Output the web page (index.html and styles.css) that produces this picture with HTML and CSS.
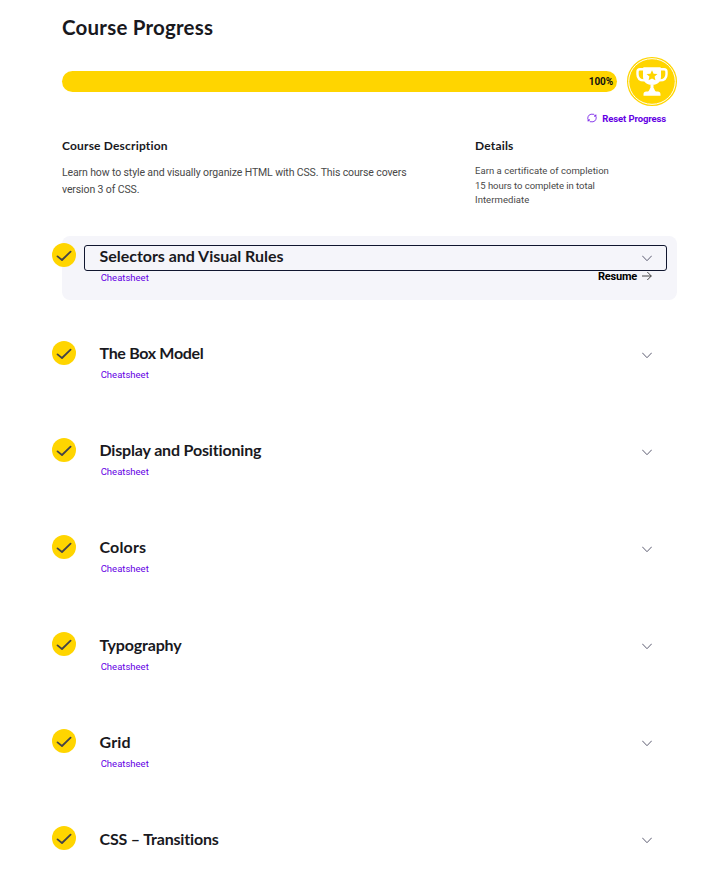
FILE: index.html
```html
<!DOCTYPE html>
<html lang="en">
<head>
<meta charset="utf-8">
<title>Course Progress</title>
<link rel="stylesheet" href="styles.css">
</head>
<body>
<svg class="defs" width="0" height="0" aria-hidden="true">
  <symbol id="check" viewBox="0 0 24 24"><path d="M5.500 13.400 10 17 18.600 8.600" fill="none" stroke="#444347" stroke-width="1.800" stroke-linecap="round" stroke-linejoin="round"/></symbol>
  <symbol id="chevron" viewBox="0 0 10 7"><path d="M.5 1 5 5.700 9.500 1" fill="none" stroke="#5d5d72" stroke-width="1" stroke-linecap="round" stroke-linejoin="round"/></symbol>
</svg>
<main class="page">
  <h1 class="page-title">Course Progress</h1>
  <div class="progress">
    <div class="bar"><span>100%</span></div>
    <svg class="trophy" viewBox="0 0 50 50" preserveAspectRatio="none">
      <circle cx="25" cy="25" r="25" fill="#ffd500"/>
      <circle cx="25" cy="25" r="23.300" fill="none" stroke="#fff" stroke-width="1"/>
      <path d="M17 10.500h16q1 0 1 1V20c0 5.300-3 8.500-9 8.500s-9-3.200-9-8.500v-8.500q0-1 1-1zM23.500 27h3v5h-3zM16.500 39.500V38c0-1.700 1-2.700 2.700-2.700h1.800c1.200 0 1.500-2.500 2.500-3.800h3c1 1.300 1.300 3.800 2.500 3.800h1.800c1.700 0 2.700 1 2.700 2.700v1.500z" fill="#fff"/>
      <path d="M17 12.500h-4q-2.500 0-2.500 2.500v2.500c0 4.200 2.300 6.300 6.800 6.300M33 12.500h4q2.500 0 2.500 2.500v2.500c0 4.200-2.300 6.300-6.800 6.300" fill="none" stroke="#fff" stroke-width="2.400"/>
      <path d="m25 13.500 1.600 3.500 3.900.4-2.900 2.600.8 3.800-3.400-1.900-3.400 1.900.8-3.800-2.900-2.600 3.900-.4z" fill="#ffd500"/>
    </svg>
  </div>
  <div class="reset">
    <svg viewBox="0 0 10 10"><path d="M1.700 7.700A4 4 0 0 1 4 1.200L7.200 1.300M8.300 2.300A4 4 0 0 1 6 8.800L2.800 8.700M.4 7.800H2.200V6M9.600 2.200H7.800V4" fill="none" stroke="#6400e4" stroke-width=".75"/></svg>
    <a>Reset Progress</a>
  </div>
  <div class="info">
    <section class="description">
      <h2>Course Description</h2>
      <p>Learn how to style and visually organize HTML with CSS. This course covers<br>version 3 of CSS.</p>
    </section>
    <section class="details">
      <h2>Details</h2>
      <ul><li>Earn a certificate of completion</li><li class="hours">15 hours to complete in total</li><li class="level">Intermediate</li></ul>
    </section>
  </div>
  <div class="modules">
    <article class="module current">
      <svg class="badge"><use href="#check"/></svg>
      <div class="content">
        <div class="heading"><h3>Selectors and Visual Rules</h3><svg class="chevron"><use href="#chevron"/></svg></div>
        <div class="links"><a class="sheet">Cheatsheet</a><a class="resume"><span>Resume</span><svg viewBox="0 0 10 10"><path d="M0 5h9.300M5.300 1l4 4-4 4" fill="none" stroke="#333" stroke-width=".9"/></svg></a></div>
      </div>
    </article>
    <article class="module">
      <svg class="badge"><use href="#check"/></svg>
      <div class="content">
        <div class="heading"><h3 class="tighter">The Box Model</h3><svg class="chevron"><use href="#chevron"/></svg></div>
        <div class="links"><a class="sheet">Cheatsheet</a></div>
      </div>
    </article>
    <article class="module">
      <svg class="badge"><use href="#check"/></svg>
      <div class="content">
        <div class="heading"><h3 class="tight">Display and Positioning</h3><svg class="chevron"><use href="#chevron"/></svg></div>
        <div class="links"><a class="sheet">Cheatsheet</a></div>
      </div>
    </article>
    <article class="module">
      <svg class="badge"><use href="#check"/></svg>
      <div class="content">
        <div class="heading"><h3 class="loose">Colors</h3><svg class="chevron"><use href="#chevron"/></svg></div>
        <div class="links"><a class="sheet">Cheatsheet</a></div>
      </div>
    </article>
    <article class="module">
      <svg class="badge"><use href="#check"/></svg>
      <div class="content">
        <div class="heading"><h3 class="tight">Typography</h3><svg class="chevron"><use href="#chevron"/></svg></div>
        <div class="links"><a class="sheet">Cheatsheet</a></div>
      </div>
    </article>
    <article class="module">
      <svg class="badge"><use href="#check"/></svg>
      <div class="content">
        <div class="heading"><h3 class="loose">Grid</h3><svg class="chevron"><use href="#chevron"/></svg></div>
        <div class="links"><a class="sheet">Cheatsheet</a></div>
      </div>
    </article>
    <article class="module">
      <svg class="badge"><use href="#check"/></svg>
      <div class="content">
        <div class="heading"><h3 class="tight">CSS – Transitions</h3><svg class="chevron"><use href="#chevron"/></svg></div>
      </div>
    </article>
  </div>
</main>
</body>
</html>
```
FILE: styles.css
```css
* { box-sizing: border-box; margin: 0; padding: 0; }
html, body { height: 870px; overflow: hidden; }
body { background: #fff; color: #19191e; font-family: Roboto, "Liberation Sans", sans-serif; font-variant-ligatures: none; }
svg { display: block; flex: none; }
.defs { position: absolute; }
h1, h2, h3, a, li, span { white-space: nowrap; }
h1, h2, h3 { font-family: Lato, "Liberation Sans", sans-serif; }
.page { width: 615px; margin-left: 62px; padding-top: 13px; }
.page-title { font-size: 20.500px; line-height: 28px; height: 44px; letter-spacing: .22px; }
.progress { display: flex; align-items: center; justify-content: space-between; height: 49px; }
.bar { width: 555px; height: 21px; border-radius: 11px; background: #ffd500; display: flex; align-items: center; justify-content: flex-end; padding-right: 4px; font-size: 10px; font-weight: 700; letter-spacing: -.1px; color: #111; }
.trophy { width: 50px; height: 49px; }
.reset { display: flex; align-items: center; justify-content: flex-end; gap: 5px; height: 14px; margin-top: 5px; padding-right: 11px; font-size: 9.500px; font-weight: 700; letter-spacing: -.12px; color: #6400e4; }
.reset svg { width: 10px; height: 10px; }
.info { display: flex; height: 111px; padding-top: 13px; }
.info h2 { font-size: 12px; line-height: 16px; letter-spacing: .18px; }
.description { width: 413px; }
.description p { margin-top: 10px; font-size: 10.500px; line-height: 17px; letter-spacing: -.12px; color: #484848; white-space: nowrap; }
.details ul { list-style: none; margin-top: 10px; font-size: 9.500px; line-height: 14.500px; letter-spacing: .04px; color: #484848; }
.details .hours { letter-spacing: -.04px; }
.details .level { letter-spacing: .06px; }
.modules { display: flex; flex-direction: column; gap: 33.150px; }
.module { display: flex; height: 64px; border-radius: 8px; padding-top: 7px; }
.current { background: #f5f5fa; }
.badge { width: 24px; height: 24px; margin: .4px 8px 0 -10px; border-radius: 50%; background: #ffd500; }
.content { width: 583px; padding-top: 2px; }
.heading { display: flex; align-items: center; justify-content: space-between; height: 26px; padding: 0 15px 0 14.500px; border: 1px solid transparent; border-radius: 3px; }
.current .heading { border-color: #10162f; }
.heading h3 { font-size: 16px; line-height: 22px; margin-top: -4px; letter-spacing: -.03px; }
.heading .tighter { letter-spacing: -.32px; }
.heading .tight { letter-spacing: -.17px; }
.heading .loose { letter-spacing: .15px; }
.chevron { width: 10px; height: 7px; margin-right: -1px; }
.links { display: flex; justify-content: space-between; padding: 0 15px 0 16.700px; line-height: 13px; font-size: 9.500px; }
.sheet { color: #6400e4; }
.resume { display: flex; align-items: center; gap: 5px; margin-top: -2px; height: 14px; font-size: 11px; font-weight: 700; letter-spacing: -.2px; color: #000; }
.resume svg { width: 10px; height: 10px; }
```
